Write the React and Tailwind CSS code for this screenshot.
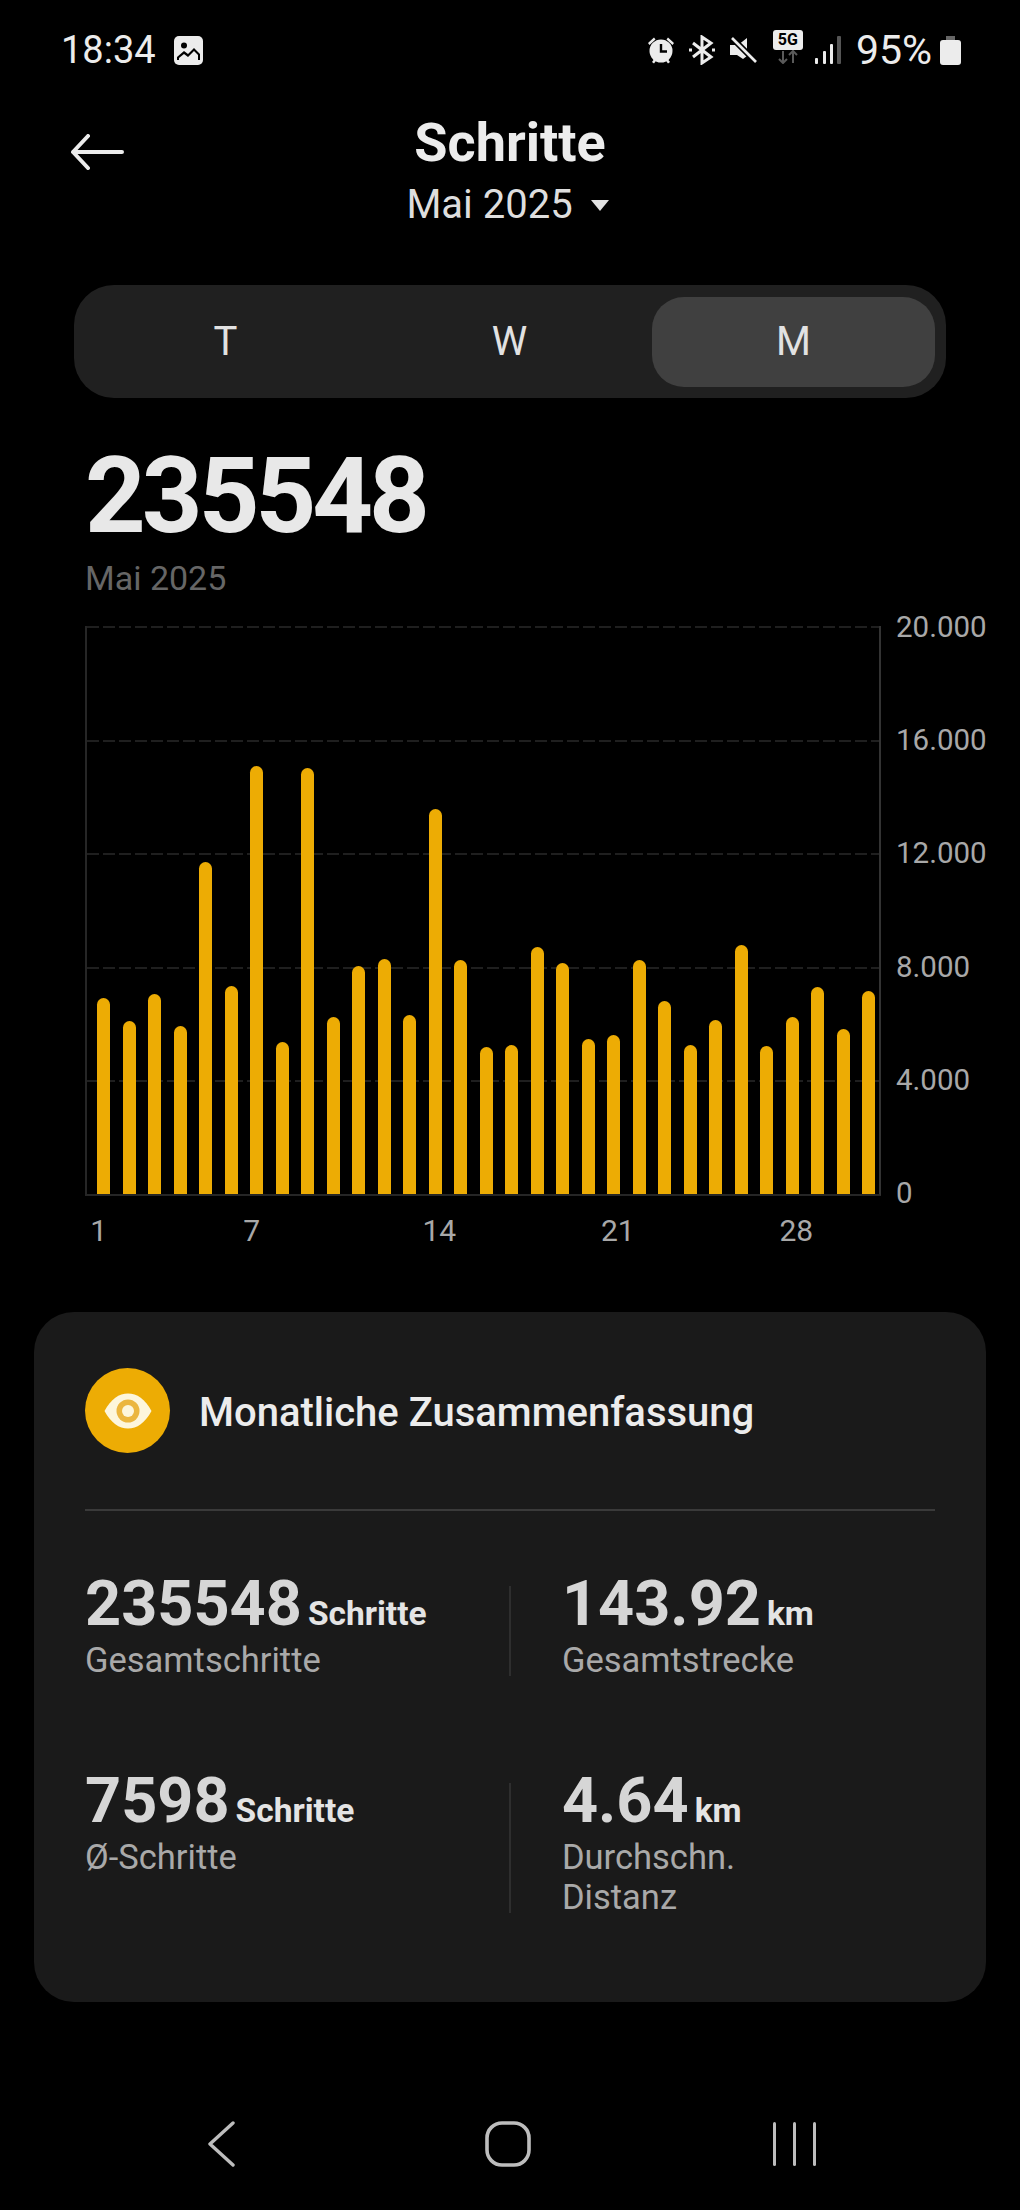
const font = "font-['Roboto',sans-serif]";

const steps = [782, 852, 770, 866, 373, 747, 87, 915, 92, 838, 685, 665, 832, 214, 669, 928, 923, 628, 678, 906, 894, 667, 792, 922, 849, 622, 927, 840, 749, 876, 761];
const xLabels = { 1: "1", 7: "7", 14: "14", 21: "21", 28: "28" };
const yLabels = ["20.000", "16.000", "12.000", "8.000", "4.000", "0"];
const dash = "h-[2px] bg-[repeating-linear-gradient(90deg,#1f1f1f_0_12px,transparent_12px_16px)]";

const StatusBar = () => (
  <div className="flex items-center justify-between h-[60px] mt-[20px] pl-[61px] pr-[59px] text-[#ececec]">
    <div className="flex items-center gap-[18px]">
      <span className="text-[38px] leading-[60px]">18:34</span>
      <svg width="29" height="29" viewBox="0 0 29 29">
        <rect width="29" height="29" rx="5" fill="#ececec" />
        <circle cx="10" cy="9.5" r="3" fill="#000" />
        <path d="M3 24 L3 21 L10 15 L14 18 L20 12 L26 18 L26 24 Z" fill="#000" />
        <path d="M5 24 L5 22 L10 18 L14 21 L20 15 L24 19 L24 24 Z" fill="#ececec" />
      </svg>
    </div>
    <div className="flex items-center">
      <svg width="30" height="28" viewBox="0 0 30 28" className="mr-[13px]" fill="#ececec">
        <circle cx="15" cy="15" r="11.5" />
        <path d="M2 7 L8 1.5 L9.5 3.5 L3.5 9 Z M28 7 L22 1.5 L20.5 3.5 L26.5 9 Z M6 26 L9 22 L11 23.5 L8 27.5 Z M24 26 L21 22 L19 23.5 L22 27.5 Z" />
        <path d="M15 8 V15.5 H21" stroke="#000" strokeWidth="2.4" fill="none" />
      </svg>
      <svg width="26" height="30" viewBox="0 0 26 30" className="mr-[14px]" fill="none" stroke="#ececec" strokeWidth="3">
        <path d="M4 8 L22 22 L13 28 V2 L22 8 L4 22" />
        <path d="M0 15 H3 M23 15 H26" />
      </svg>
      <svg width="28" height="26" viewBox="0 0 28 26" className="mr-[16px]">
        <path d="M1 8 H9 L18 1 V19 L14 22 L8 18 H1 Z" fill="#ececec" />
        <path d="M3 1 L27 25" stroke="#000" strokeWidth="6" />
        <path d="M3 1 L27 25" stroke="#ececec" strokeWidth="2.6" />
      </svg>
      <div className="flex flex-col items-center mr-[12px] -mt-[6px]">
        <span className="w-[30px] h-[20px] rounded-[3px] bg-[#ececec] text-black text-[16px] leading-[20px] font-bold text-center">5G</span>
        <svg width="26" height="14" viewBox="0 0 26 14" fill="none" stroke="#5a5a5a" strokeWidth="2">
          <path d="M8 1 V13 M4 9 L8 13 L12 9 M18 13 V1 M14 5 L18 1 L22 5" />
        </svg>
      </div>
      <svg width="26" height="28" viewBox="0 0 26 28" className="mr-[15px]">
        <rect x="0" y="22" width="3" height="6" rx="1" fill="#ececec" />
        <rect x="8" y="15" width="3" height="13" rx="1" fill="#ececec" />
        <rect x="15" y="8" width="3" height="20" rx="1" fill="#ececec" />
        <rect x="22" y="0" width="4" height="28" rx="1" fill="#555" />
      </svg>
      <span className="text-[41px] leading-[60px] mr-[8px]">95%</span>
      <svg width="21" height="29" viewBox="0 0 21 29" fill="#ececec">
        <rect x="6" y="0" width="9" height="4" fill="#666" />
        <rect x="0" y="4" width="21" height="25" rx="3" />
      </svg>
    </div>
  </div>
);

const Header = () => (
  <div className="flex items-start mt-[30px] pl-[70px]">
    <svg width="54" height="36" viewBox="0 0 54 36" fill="none" stroke="#ececec" strokeWidth="4" strokeLinecap="round" strokeLinejoin="round" className="mt-[24px]">
      <path d="M52 18 H3 M18 2 L3 18 L18 34" />
    </svg>
    <div className="flex-1 flex flex-col items-center pt-[3px] pr-[124px]">
      <h1 className="text-[54px] leading-[60px] font-bold text-[#ececec]">Schritte</h1>
      <div className="flex items-center gap-[17px] mt-[2px] mr-[4px]">
        <span className="text-[40px] leading-[60px] text-[#dedede]">Mai 2025</span>
        <svg width="20" height="12" viewBox="0 0 20 12" fill="#e2e2e2">
          <path d="M1 1 H19 L10 12 Z" />
        </svg>
      </div>
    </div>
  </div>
);

const Tabs = () => (
  <div className="flex items-center h-[113px] mt-[50px] mx-[74px] px-[10px] rounded-[40px] bg-[#202020] text-[40px] text-[#e2e2e2]">
    <span className="w-[283px] text-center">T</span>
    <span className="w-[285px] text-center">W</span>
    <span className="w-[283px] h-[90px] flex items-center justify-center rounded-[32px] bg-[#404040]">M</span>
  </div>
);

const Chart = () => (
  <div className="mt-[26px] ml-[85px]">
    <div className="flex">
      <div className="relative w-[796px] h-[570px] border-l-2 border-r-2 border-b-2 border-l-[#262626] border-r-[#333333] border-b-[#262626]">
        {/* dashed grid behind the bars */}
        <div className="absolute inset-0 flex flex-col justify-between">
          <div className={dash} />
          <div className={dash} />
          <div className={dash} />
          <div className={dash} />
          <div className={dash} />
          <div />
        </div>
        <div className="absolute inset-0 flex items-end gap-[12.5px] pl-[10px]">
          {steps.map((y, i) => (
            <div
              key={i}
              className="w-[13px] shrink-0 rounded-t-full bg-[#edac04]"
              style={{ height: (1370 - y) / 3 }}
            />
          ))}
        </div>
      </div>
      <div className="flex flex-col justify-between h-[600px] -mt-[16px] ml-[15px] text-[29.5px] leading-[34px] text-[#a8a8a8]">
        {yLabels.map((l) => (
          <span key={l}>{l}</span>
        ))}
      </div>
    </div>
    <div className="flex pl-[10px] -mt-[14px] pt-[18px] text-[30px] leading-[34px] text-[#a8a8a8]">
      {steps.map((_, i) => (
        <div key={i} className={`w-[25.5px] shrink-0 flex justify-center whitespace-nowrap ${i < 7 ? "-translate-x-[9px]" : ""}`}>
          {xLabels[i + 1] || ""}
        </div>
      ))}
    </div>
  </div>
);

const Stat = ({ value, unit, label, divider }) => (
  <div className={`w-[425px] h-[130px] ${divider ? "pl-[51px]" : "pl-0"}`}>
    <div className="flex items-baseline gap-[6px]">
      <span className="text-[63px] leading-[72px] font-bold text-[#d6d6d6]">{value}</span>
      <span className="text-[33.5px] leading-[40px] font-bold text-[#e4e4e4]">{unit}</span>
    </div>
    <p className="text-[34.5px] leading-[40px] text-[#a9a9a9]">{label}</p>
  </div>
);

const SummaryCard = () => (
  <div className="mt-[64px] mx-[34px] h-[690px] rounded-[40px] bg-[#1a1a1a] px-[51px] pt-[56px]">
    <div className="flex items-center gap-[29px]">
      <div className="w-[85px] h-[85px] rounded-full bg-[#edac04] flex items-center justify-center">
        <svg width="48" height="36" viewBox="0 0 48 36">
          <path d="M0.5 18 C7 6 15 0.5 24 0.5 C33 0.5 41 6 47.5 18 C41 30 33 35.5 24 35.5 C15 35.5 7 30 0.5 18 Z" fill="#fdf6dc" />
          <circle cx="24" cy="18" r="11.5" fill="#ebb63f" />
          <circle cx="24" cy="18" r="6" fill="#fdf6dc" />
        </svg>
      </div>
      <h2 className="pt-[5px] text-[40px] leading-[50px] font-medium text-[#ececec]">Monatliche Zusammenfassung</h2>
    </div>
    <div className="h-[2px] mt-[56px] bg-[#3a3a3a]" />
    <div className="flex mt-[57px]">
      <Stat value="235548" unit="Schritte" label="Gesamtschritte" />
      <div className="w-[2px] h-[90px] mt-[18px] bg-[#2e2e2e]" />
      <Stat value="143.92" unit="km" label="Gesamtstrecke" divider />
    </div>
    <div className="flex mt-[67px]">
      <Stat value="7598" unit="Schritte" label="Ø-Schritte" />
      <div className="w-[2px] h-[130px] mt-[18px] bg-[#2e2e2e]" />
      <Stat value="4.64" unit="km" label={<>Durchschn.<br />Distanz</>} divider />
    </div>
  </div>
);

const NavBar = () => (
  <div className="flex items-center mt-[119px] pl-[207px]">
    <svg width="28" height="46" viewBox="0 0 28 46" fill="none" stroke="#bdbdbd" strokeWidth="3.4" strokeLinecap="round" strokeLinejoin="round">
      <path d="M26 2 L3 23 L26 44" />
    </svg>
    <svg width="46" height="46" viewBox="0 0 46 46" fill="none" stroke="#bdbdbd" strokeWidth="3.6" className="ml-[250px]">
      <rect x="2" y="2" width="42" height="42" rx="15" />
    </svg>
    <div className="flex gap-[17px] ml-[242px]">
      <span className="w-[3px] h-[44px] bg-[#bdbdbd] rounded-full" />
      <span className="w-[3px] h-[44px] bg-[#bdbdbd] rounded-full" />
      <span className="w-[3px] h-[44px] bg-[#bdbdbd] rounded-full" />
    </div>
  </div>
);

export default function App() {
  return (
    <div className={`w-[1020px] h-[2210px] overflow-hidden bg-black ${font}`}>
      <StatusBar />
      <Header />
      <Tabs />
      <div className="ml-[85px] mt-[42px]">
        <div className="text-[106px] leading-[112px] font-bold tracking-[-4px] text-[#e8e8e8]">235548</div>
        <div className="mt-[4px] text-[34px] leading-[44px] text-[#666]">Mai 2025</div>
      </div>
      <Chart />
      <SummaryCard />
      <NavBar />
    </div>
  );
}
